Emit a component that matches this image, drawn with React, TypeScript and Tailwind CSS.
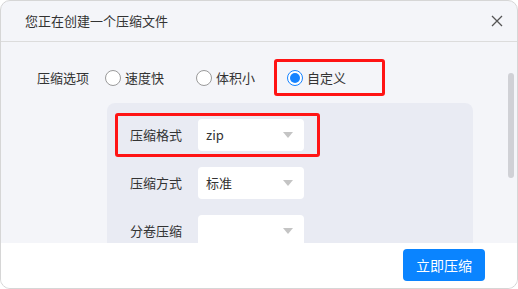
import React from "react";

const font = { fontFamily: '"Noto Sans CJK SC", "Noto Sans", sans-serif' };

const Radio = ({ checked, label }: { checked?: boolean; label: string }) => (
  <div className="flex items-center gap-[4px]">
    {checked ? (
      <span className="flex h-[16px] w-[16px] items-center justify-center rounded-full border border-[#1683ff] bg-white">
        <span className="h-[10px] w-[10px] rounded-full bg-[#1683ff]" />
      </span>
    ) : (
      <span className="h-[16px] w-[16px] rounded-full border border-[#9a9a9a] bg-white" />
    )}
    <span className="text-[13px] leading-none text-[#333]">{label}</span>
  </div>
);

const Select = ({ value }: { value?: string }) => (
  <div className="flex h-[32px] w-[106px] items-center justify-between rounded-[4px] bg-white pl-[8px] pr-[11px]">
    <span className="text-[13px] text-[#333]">{value}</span>
    <svg width="10" height="6" viewBox="0 0 10 6">
      <path d="M0 0 L10 0 L5 6 Z" fill="#c4c4c4" />
    </svg>
  </div>
);

const Field = ({ label, value }: { label: string; value?: string }) => (
  <div className="flex items-center gap-[16px]">
    <span className="w-[52px] text-[13px] text-[#333]">{label}</span>
    <Select value={value} />
  </div>
);

export default function App() {
  return (
    <div style={font} className="flex h-[289px] w-[518px] flex-col overflow-hidden rounded-[10px] border border-[#d6d6d6] bg-[#f4f5f9]">
      {/* header */}
      <div className="flex h-[41px] shrink-0 items-center justify-between border-b border-[#dcdcdc] pl-[24px] pr-[14px]">
        <span className="text-[13px] text-[#333]">您正在创建一个压缩文件</span>
        <svg width="12" height="12" viewBox="0 0 12 12">
          <path d="M1 1 L11 11 M11 1 L1 11" stroke="#555" strokeWidth="1.3" />
        </svg>
      </div>

      {/* body */}
      <div className="relative flex-1 overflow-hidden">
        <div className="mt-[17px] flex h-[37px] items-center pl-[36px]">
          <span className="mr-[16px] w-[52px] text-[13px] text-[#333]">压缩选项</span>
          <Radio label="速度快" />
          <div className="ml-[32px]">
            <Radio label="体积小" />
          </div>
          <div className="ml-[19px] flex h-[37px] items-center rounded-[3px] border-[3px] border-[#ff1414] pl-[10px] pr-[36px]">
            <Radio checked label="自定义" />
          </div>
        </div>

        <div className="ml-[106px] mr-[44px] mt-[7px] h-[200px] rounded-[8px] bg-[#e9ebf3] pl-[8px] pt-[10px]">
          <div className="inline-flex rounded-[3px] border-[3px] border-[#ff1414] py-[3px] pl-[12px] pr-[13px]">
            <Field label="压缩格式" value="zip" />
          </div>
          <div className="mt-[10px] pl-[15px]">
            <Field label="压缩方式" value="标准" />
          </div>
          <div className="mt-[16px] pl-[15px]">
            <Field label="分卷压缩" />
          </div>
        </div>

        {/* scrollbar */}
        <div className="absolute right-[3px] top-[31px] h-[105px] w-[6px] rounded-full bg-[#d0d1d6]" />
      </div>

      {/* footer */}
      <div className="flex h-[45px] shrink-0 items-start justify-end bg-white pr-[32px] pt-[6px]">
        <button className="h-[32px] w-[82px] rounded-[4px] bg-[#0a84ff] text-[14px] text-white">立即压缩</button>
      </div>
    </div>
  );
}
